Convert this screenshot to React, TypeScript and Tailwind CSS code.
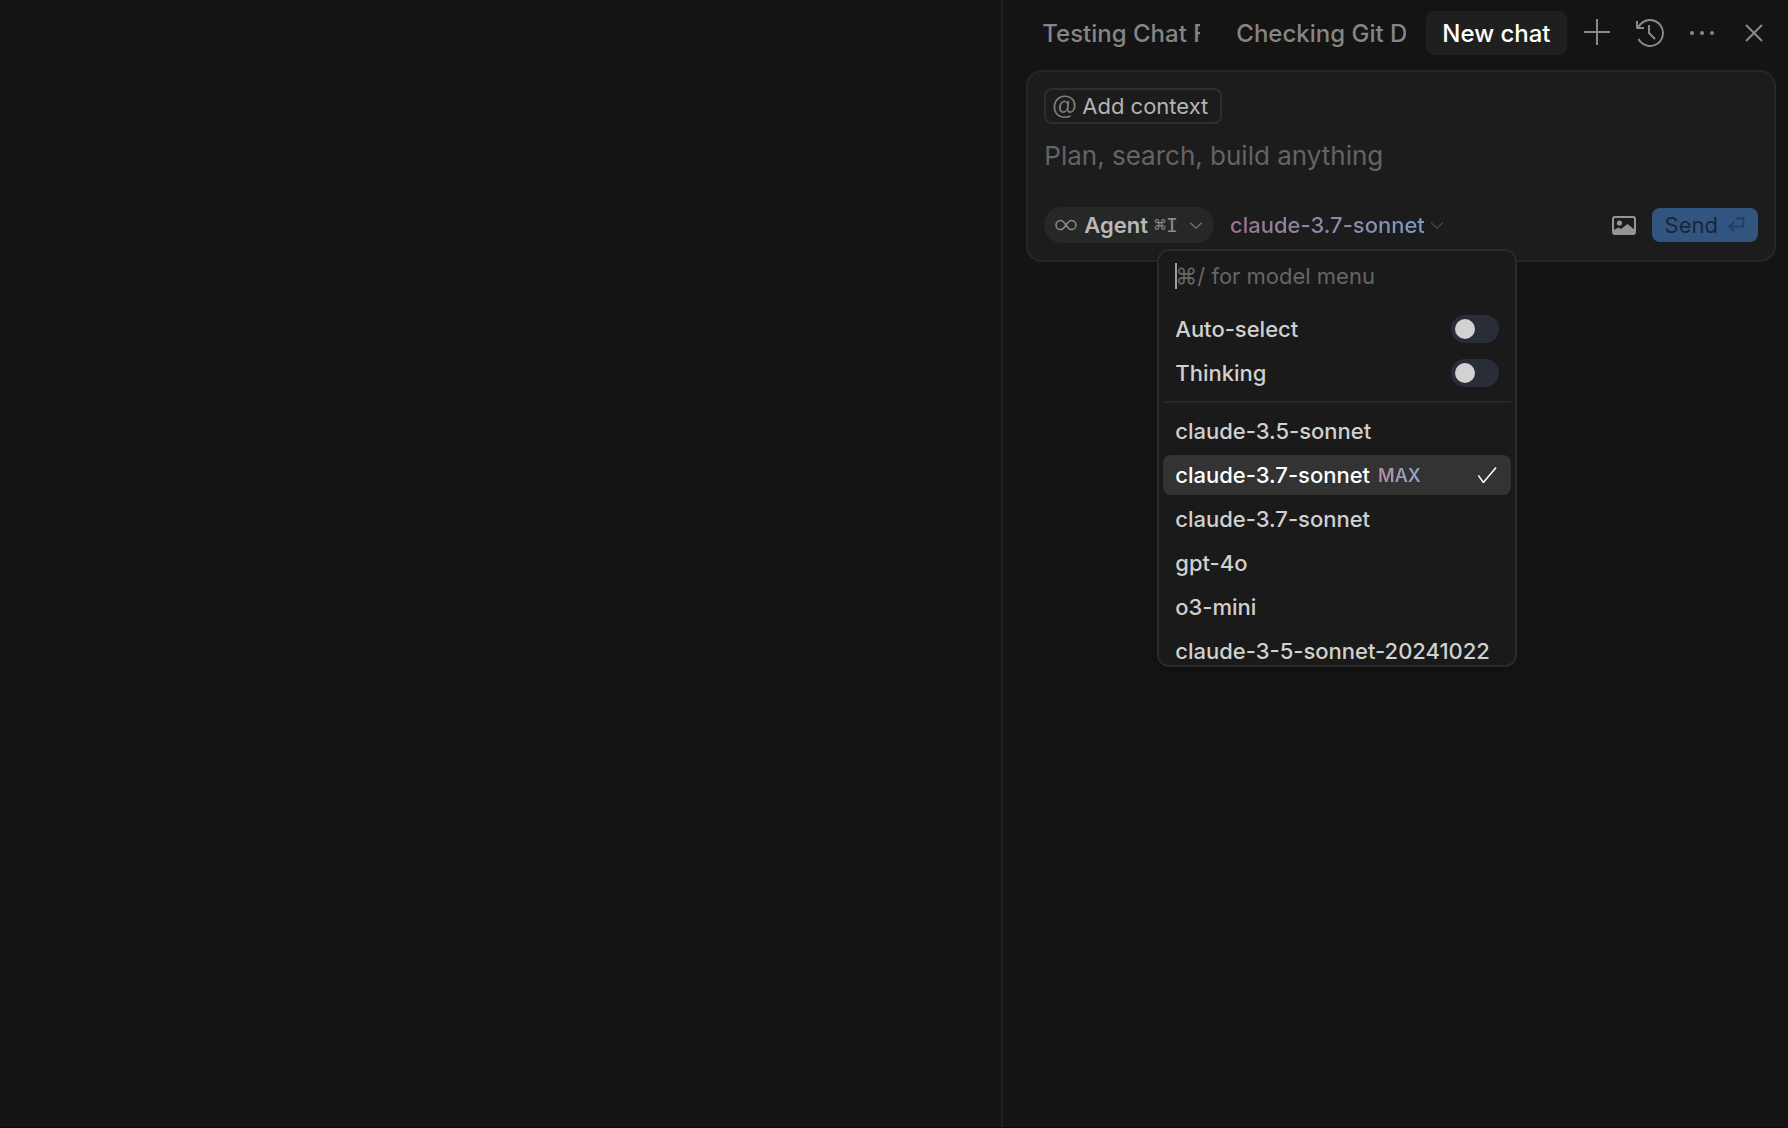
import React, { useState } from 'react';
import { VscAdd, VscCheck, VscChevronDown, VscClose, VscEllipsis, VscHistory, VscMention } from 'react-icons/vsc';

const tabs = [
  { id: 'testing', title: 'Testing Chat F', width: 'w-[190px]' },
  { id: 'git', title: 'Checking Git D', width: 'w-[202px]' },
  { id: 'new', title: 'New chat', width: '' },
];

const models = [
  { id: 'claude-3.5-sonnet', name: 'claude-3.5-sonnet' },
  { id: 'claude-3.7-sonnet-max', name: 'claude-3.7-sonnet', max: true },
  { id: 'claude-3.7-sonnet', name: 'claude-3.7-sonnet' },
  { id: 'gpt-4o', name: 'gpt-4o' },
  { id: 'o3-mini', name: 'o3-mini' },
  { id: 'claude-3-5-sonnet-20241022', name: 'claude-3-5-sonnet-20241022' },
];

function InfinityIcon() {
  return (
    <svg width="22" height="12" viewBox="0 0 22 12" fill="none" stroke="currentColor" strokeWidth="1.5">
      <path d="M11 6C9.2 3.2 7.8 1.4 5.6 1.4a4.6 4.6 0 0 0 0 9.2C7.8 10.6 9.2 8.8 11 6s3.2-4.6 5.4-4.6a4.6 4.6 0 0 1 0 9.2C14.2 10.6 12.8 8.8 11 6Z" />
    </svg>
  );
}

function ImageIcon() {
  return (
    <svg width="24" height="19" viewBox="0 0 24 19" fill="none">
      <rect x="1" y="1" width="22" height="17" rx="2" stroke="currentColor" strokeWidth="2" />
      <circle cx="7.5" cy="7" r="2.6" fill="currentColor" />
      <path d="M1 14.5 6.5 11.5l2.5 1.5L15.5 8 23 14v4H1Z" fill="currentColor" />
    </svg>
  );
}

function ReturnIcon() {
  return (
    <svg width="17" height="16" viewBox="0 0 17 16" fill="none" stroke="currentColor" strokeWidth="1.8">
      <path d="M8 1.5h7.5v8H2M6 5 1.5 9.5 6 14" />
    </svg>
  );
}

function ToggleRow({ id, label }: { id: string; label: string }) {
  const [on, setOn] = useState(false);

  return (
    <div className="flex h-11 items-center justify-between px-3">
      <label htmlFor={id}>{label}</label>
      <input
        id={id}
        type="checkbox"
        role="switch"
        checked={on}
        onChange={(e) => setOn(e.target.checked)}
        className="flex h-7 w-12 appearance-none items-center rounded-full bg-[#292d38] px-1 before:size-5 before:rounded-full before:bg-[#d2d2d2] checked:justify-end checked:bg-[#325580]"
      />
    </div>
  );
}

function ModelMenu({ selected, onSelect }: { selected: string; onSelect: (id: string) => void }) {
  return (
    <div className="absolute top-[42px] left-[113px] z-10 h-[418px] w-[360px] overflow-hidden rounded-xl border-2 border-[#2a2a2a] bg-[#1a1a1a] px-1 text-[22px] font-medium text-[#d0d0d0] shadow-lg">
      <div className="relative mb-[6px] flex h-[50px] items-center px-3">
        <input
          aria-label="Search models"
          placeholder="⌘/ for model menu"
          className="w-full bg-transparent font-normal caret-transparent outline-none placeholder:text-[#666666]"
        />
        <span className="absolute left-3 h-[26px] w-[2px] bg-[#a0a0a0]" />
      </div>

      <ToggleRow id="auto-select" label="Auto-select" />
      <ToggleRow id="thinking" label="Thinking" />

      <hr className="my-[6px] border-t-2 border-[#272727]" />

      <ul>
        {models.map((model) => {
          const active = model.id === selected;
          return (
            <li key={model.id} className="py-[2px]">
              <button
                type="button"
                onClick={() => onSelect(model.id)}
                className={`flex h-10 w-full items-center rounded-lg px-3 ${active ? 'bg-[#333333] text-white' : ''}`}
              >
                {model.name}
                {model.max && (
                  <span className="ml-2 bg-linear-to-r from-[#b48aa8] to-[#86a5cc] bg-clip-text text-[18px] font-semibold text-transparent">
                    MAX
                  </span>
                )}
                {active && <VscCheck className="ml-auto size-6" />}
              </button>
            </li>
          );
        })}
      </ul>
    </div>
  );
}

export default function App() {
  const [activeTab, setActiveTab] = useState('new');
  const [prompt, setPrompt] = useState('');
  const [model, setModel] = useState('claude-3.7-sonnet-max');
  const [menuOpen, setMenuOpen] = useState(true);

  const modelName = models.find((m) => m.id === model)?.name;

  return (
    <div className="flex h-screen overflow-hidden border-b border-[#0c0a0a] bg-[#141414] font-['Inter','Liberation_Sans',sans-serif]">
      {/* Editor area */}
      <main className="flex-1" />

      {/* Chat sidebar */}
      <aside className="w-[44%] border-l-2 border-[#202020]">
        <header className="flex h-[66px] items-center pr-2 pl-[23px]">
          <div role="tablist" className="flex gap-1">
            {tabs.map((tab) => (
              <button
                key={tab.id}
                type="button"
                role="tab"
                aria-selected={tab.id === activeTab}
                onClick={() => setActiveTab(tab.id)}
                className={`h-11 rounded-lg px-4 pt-[2px] text-left text-[24px] font-medium ${tab.width} ${
                  tab.id === activeTab ? 'bg-[#1f1f1f] text-white' : 'text-[#858585]'
                }`}
              >
                <span className="block overflow-hidden whitespace-nowrap">{tab.title}</span>
              </button>
            ))}
          </div>
          <div className="ml-auto flex text-[#8a8a8a]">
            <button type="button" aria-label="New chat" className="flex w-[52px] justify-center">
              <VscAdd className="size-8" />
            </button>
            <button type="button" aria-label="History" className="flex w-[52px] justify-center">
              <VscHistory className="size-8" />
            </button>
            <button type="button" aria-label="More" className="flex w-[52px] justify-center">
              <VscEllipsis className="size-8" />
            </button>
            <button type="button" aria-label="Close" className="flex w-[52px] justify-center">
              <VscClose className="size-8" />
            </button>
          </div>
        </header>

        <div className="pt-1 pr-3 pl-[23px]">
          <form
            onSubmit={(e) => e.preventDefault()}
            className="rounded-2xl border-2 border-[#272727] bg-[#1c1c1c] px-4 pt-4 pb-[17px]"
          >
            <button
              type="button"
              className="flex h-9 items-center gap-1 rounded-lg border-2 border-[#2e2e2e] pr-3 pl-1 text-[22px] text-[#b4b4b4]"
            >
              <VscMention className="size-7 text-[#7c7c7c]" />
              Add context
            </button>

            <textarea
              aria-label="Message"
              rows={1}
              value={prompt}
              onChange={(e) => setPrompt(e.target.value)}
              placeholder="Plan, search, build anything"
              className="mt-3 block h-[71px] w-full resize-none bg-transparent text-[26px] leading-10 text-[#d0d0d0] outline-none placeholder:text-[#646464]"
            />

            <div className="relative flex h-9 items-center">
              <button
                type="button"
                className="flex h-9 items-center rounded-full bg-[#262828] pr-2 pl-[11px] text-[22px] font-semibold text-[#b8b8b8]"
              >
                <span className="mr-[7px] text-[#8a8a8a]">
                  <InfinityIcon />
                </span>
                Agent
                <span className="ml-[6px] font-['DejaVu_Sans_Mono',monospace] text-[20px] font-normal text-[#8a8a8a]">⌘I</span>
                <VscChevronDown className="ml-2 size-5 text-[#7c7c7c]" />
              </button>

              <button
                type="button"
                aria-expanded={menuOpen}
                onClick={() => setMenuOpen(!menuOpen)}
                className="ml-4 flex items-center gap-[2px] text-[22px] font-medium"
              >
                <span className="bg-linear-to-r from-[#9a7390] to-[#7b9ac4] bg-clip-text text-transparent">{modelName}</span>
                <VscChevronDown className="size-5 text-[#4c4c4c]" />
              </button>

              <button type="button" aria-label="Attach image" className="mr-4 ml-auto text-[#959595]">
                <ImageIcon />
              </button>
              <button
                type="submit"
                className="flex h-[34px] items-center gap-[10px] rounded-lg bg-[#325580] px-[13px] text-[22px] text-[#17263a]"
              >
                Send
                <span className="text-[#213f62]">
                  <ReturnIcon />
                </span>
              </button>

              {menuOpen && <ModelMenu selected={model} onSelect={setModel} />}
            </div>
          </form>
        </div>
      </aside>
    </div>
  );
}
